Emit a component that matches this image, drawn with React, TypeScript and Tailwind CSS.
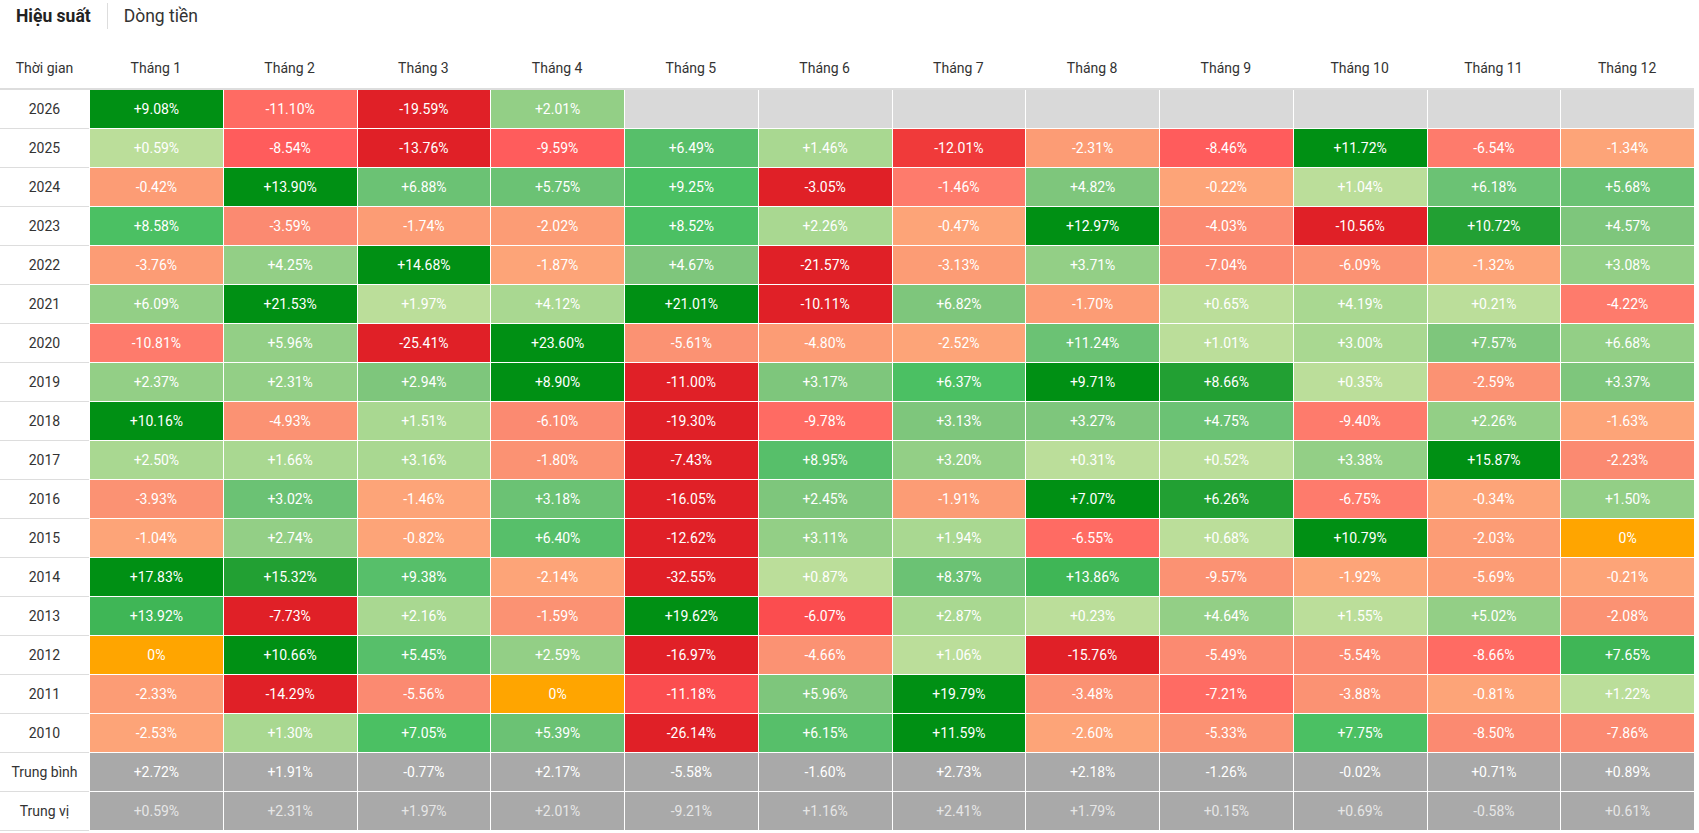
import React from "react";

type Row = { label: string; values: (number | null)[]; kind?: "avg" | "med" };

const N = null;
const rows: Row[] = [
  { label: "2026", values: [9.08, -11.1, -19.59, 2.01, N, N, N, N, N, N, N, N] },
  { label: "2025", values: [0.59, -8.54, -13.76, -9.59, 6.49, 1.46, -12.01, -2.31, -8.46, 11.72, -6.54, -1.34] },
  { label: "2024", values: [-0.42, 13.9, 6.88, 5.75, 9.25, -3.05, -1.46, 4.82, -0.22, 1.04, 6.18, 5.68] },
  { label: "2023", values: [8.58, -3.59, -1.74, -2.02, 8.52, 2.26, -0.47, 12.97, -4.03, -10.56, 10.72, 4.57] },
  { label: "2022", values: [-3.76, 4.25, 14.68, -1.87, 4.67, -21.57, -3.13, 3.71, -7.04, -6.09, -1.32, 3.08] },
  { label: "2021", values: [6.09, 21.53, 1.97, 4.12, 21.01, -10.11, 6.82, -1.7, 0.65, 4.19, 0.21, -4.22] },
  { label: "2020", values: [-10.81, 5.96, -25.41, 23.6, -5.61, -4.8, -2.52, 11.24, 1.01, 3.0, 7.57, 6.68] },
  { label: "2019", values: [2.37, 2.31, 2.94, 8.9, -11.0, 3.17, 6.37, 9.71, 8.66, 0.35, -2.59, 3.37] },
  { label: "2018", values: [10.16, -4.93, 1.51, -6.1, -19.3, -9.78, 3.13, 3.27, 4.75, -9.4, 2.26, -1.63] },
  { label: "2017", values: [2.5, 1.66, 3.16, -1.8, -7.43, 8.95, 3.2, 0.31, 0.52, 3.38, 15.87, -2.23] },
  { label: "2016", values: [-3.93, 3.02, -1.46, 3.18, -16.05, 2.45, -1.91, 7.07, 6.26, -6.75, -0.34, 1.5] },
  { label: "2015", values: [-1.04, 2.74, -0.82, 6.4, -12.62, 3.11, 1.94, -6.55, 0.68, 10.79, -2.03, 0] },
  { label: "2014", values: [17.83, 15.32, 9.38, -2.14, -32.55, 0.87, 8.37, 13.86, -9.57, -1.92, -5.69, -0.21] },
  { label: "2013", values: [13.92, -7.73, 2.16, -1.59, 19.62, -6.07, 2.87, 0.23, 4.64, 1.55, 5.02, -2.08] },
  { label: "2012", values: [0, 10.66, 5.45, 2.59, -16.97, -4.66, 1.06, -15.76, -5.49, -5.54, -8.66, 7.65] },
  { label: "2011", values: [-2.33, -14.29, -5.56, 0, -11.18, 5.96, 19.79, -3.48, -7.21, -3.88, -0.81, 1.22] },
  { label: "2010", values: [-2.53, 1.3, 7.05, 5.39, -26.14, 6.15, 11.59, -2.6, -5.33, 7.75, -8.5, -7.86] },
  { label: "Trung bình", kind: "avg", values: [2.72, 1.91, -0.77, 2.17, -5.58, -1.6, 2.73, 2.18, -1.26, -0.02, 0.71, 0.89] },
  { label: "Trung vị", kind: "med", values: [0.59, 2.31, 1.97, 2.01, -9.21, 1.16, 2.41, 1.79, 0.15, 0.69, -0.58, 0.61] },
];

const G = ["#bbde9a", "#a9d891", "#93cf86", "#7ec67c", "#6bc274", "#57bf6a", "#4bc063", "#3fb656", "#22a033", "#009014"];
const R = ["#fda478", "#fc9c75", "#fb9273", "#fb8a71", "#fe7b6c", "#ff6b63", "#ff5c5c", "#fb4d4f", "#f03a3a", "#e02027"];

function fmt(v: number) {
  if (v === 0) return "0%";
  return (v > 0 ? "+" : "") + v.toFixed(2) + "%";
}

function cellColor(v: number, max: number, min: number) {
  if (v === 0) return "#ffa500";
  if (v > 0) {
    const i = Math.min(9, Math.floor((v / max) * 10));
    return G[i];
  }
  const i = Math.min(9, Math.floor((v / min) * 10));
  return R[i];
}

const months = Array.from({ length: 12 }, (_, i) => `Tháng ${i + 1}`);

export default function App() {
  return (
    <div className="w-[1699px] h-[833px] bg-white overflow-hidden font-[Roboto,sans-serif] text-[#333]">
      <div className="flex items-center h-[32px] pl-[16px]">
        <span className="text-[17.5px] font-bold text-[#222]">Hiệu suất</span>
        <div className="w-px h-[26px] bg-[#dddddd] mx-[16px]" />
        <span className="text-[17.5px] text-[#333]">Dòng tiền</span>
      </div>
      <div className="w-[1694px] mt-[16px] text-[14px]">
        <div className="flex h-[42px] items-center border-b-2 border-[#dddddd]">
          <div className="w-[89px] shrink-0 text-center">Thời gian</div>
          {months.map((m) => (
            <div key={m} className="flex-1 text-center">
              {m}
            </div>
          ))}
        </div>
        {rows.map((row) => {
          const nums = row.values.filter((v): v is number => v !== null);
          const max = Math.max(...nums.filter((v) => v > 0), 0.0001);
          const min = Math.min(...nums.filter((v) => v < 0), -0.0001);
          return (
            <div key={row.label} className="flex h-[39px]">
              <div className="w-[89px] shrink-0 flex items-center justify-center border-b border-[#dddddd]">
                {row.label}
              </div>
              {row.values.map((v, i) => {
                let bg = "#d9d9d9";
                if (row.kind) bg = "#a9a9a9";
                else if (v !== null) bg = cellColor(v, max, min);
                return (
                  <div
                    key={i}
                    className={`flex-1 flex items-center justify-center border-l border-b border-white ${
                      row.kind === "med" ? "text-[#e6e6e6]" : "text-white"
                    }`}
                    style={{ backgroundColor: bg }}
                  >
                    {v === null ? "" : fmt(v)}
                  </div>
                );
              })}
            </div>
          );
        })}
      </div>
    </div>
  );
}
